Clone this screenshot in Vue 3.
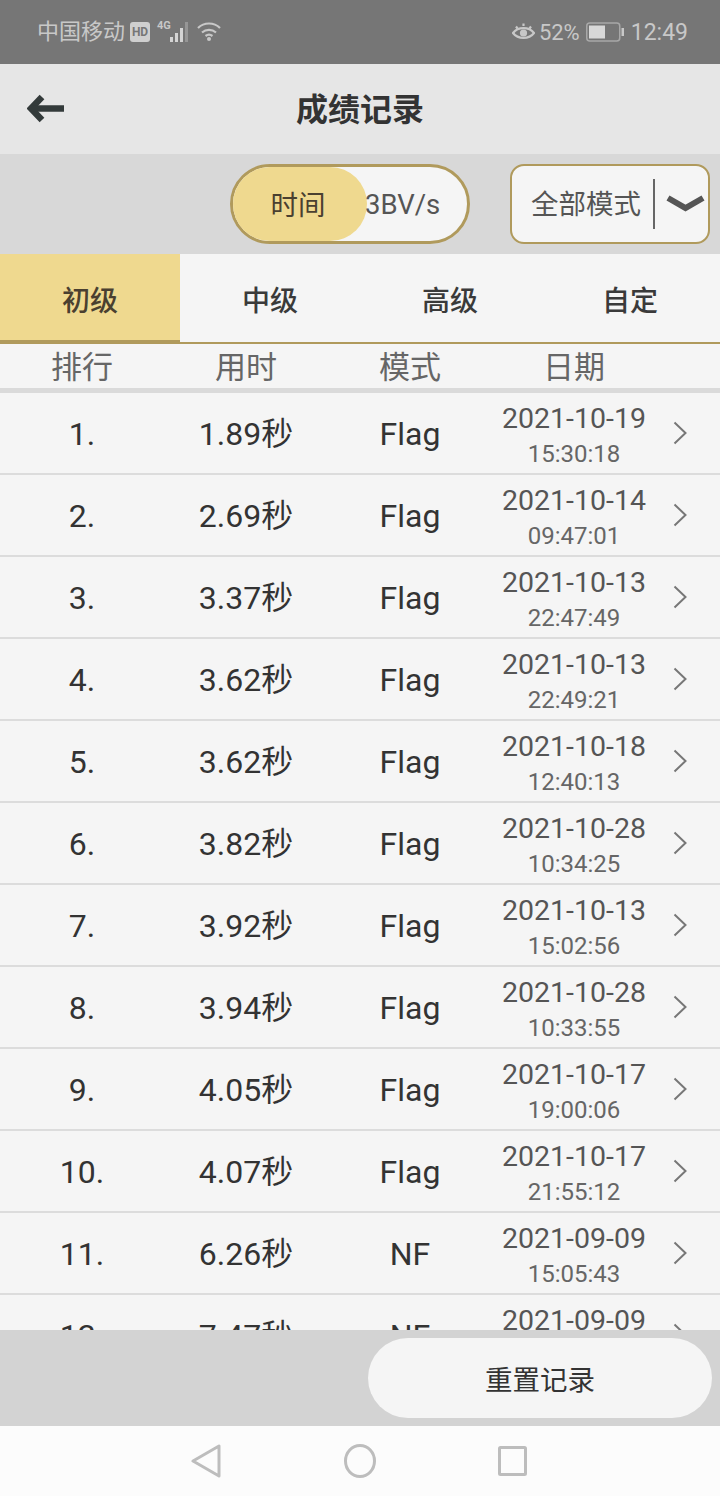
<script setup>
import { ref } from 'vue'

const tabs = ['初级', '中级', '高级', '自定']
const activeTab = ref(0)

const records = [
  { time: '1.89', mode: 'Flag', date: '2021-10-19', clock: '15:30:18' },
  { time: '2.69', mode: 'Flag', date: '2021-10-14', clock: '09:47:01' },
  { time: '3.37', mode: 'Flag', date: '2021-10-13', clock: '22:47:49' },
  { time: '3.62', mode: 'Flag', date: '2021-10-13', clock: '22:49:21' },
  { time: '3.62', mode: 'Flag', date: '2021-10-18', clock: '12:40:13' },
  { time: '3.82', mode: 'Flag', date: '2021-10-28', clock: '10:34:25' },
  { time: '3.92', mode: 'Flag', date: '2021-10-13', clock: '15:02:56' },
  { time: '3.94', mode: 'Flag', date: '2021-10-28', clock: '10:33:55' },
  { time: '4.05', mode: 'Flag', date: '2021-10-17', clock: '19:00:06' },
  { time: '4.07', mode: 'Flag', date: '2021-10-17', clock: '21:55:12' },
  { time: '6.26', mode: 'NF', date: '2021-09-09', clock: '15:05:43' },
  { time: '7.47', mode: 'NF', date: '2021-09-09', clock: '15:11:20' },
]
</script>

<template>
  <div class="page">
    <div class="status">
      <div class="status-left">
        <span class="carrier">中国移动</span>
        <span class="hd">HD</span>
        <span class="net">4G</span>
        <svg class="bars" width="22" height="22" viewBox="0 0 22 22">
          <rect x="1" y="15" width="3" height="5" fill="#d4d4d4" />
          <rect x="6" y="11" width="3" height="9" fill="#d4d4d4" />
          <rect x="11" y="6" width="3" height="14" fill="#d4d4d4" />
          <rect x="16" y="0" width="3" height="20" fill="#969696" />
        </svg>
        <svg class="wifi" width="25" height="22" viewBox="0 0 25 22" fill="none" stroke="#c8c8c8" stroke-width="2.200">
          <path d="M1 7C7 1 17 1 23 7" />
          <path d="M5 11.500C9 8 15 8 19 11.500" />
          <path d="M8.500 15C10.500 13.500 13.500 13.500 15.500 15" />
          <circle cx="12" cy="18" r="2" fill="#c8c8c8" stroke="none" />
        </svg>
      </div>
      <div class="status-right">
        <svg width="23" height="20" viewBox="0 0 23 20" fill="none" stroke="#c8c8c8" stroke-width="2.200">
          <path d="M1 11C6 4.500 17 4.500 22 11C17 17.500 6 17.500 1 11Z" />
          <circle cx="11.500" cy="11" r="3.600" fill="#c8c8c8" stroke="none" />
          <path d="M4 4.500L5.500 6.500M11.500 1.500V4M19 4.500L17.500 6.500" />
        </svg>
        <span class="pct">52%</span>
        <svg width="38" height="20" viewBox="0 0 38 20">
          <rect x="0.750" y="1" width="33" height="18" rx="3" fill="none" stroke="#a8a8a8" stroke-width="1.500" />
          <rect x="3" y="3.500" width="16" height="13" fill="#d8d8d8" />
          <rect x="35.500" y="6" width="2.500" height="8" fill="#c8c8c8" />
        </svg>
        <span class="clock">12:49</span>
      </div>
    </div>

    <div class="titlebar">
      <svg class="back" width="38" height="30" viewBox="0 0 38 30" fill="none" stroke="#333a3a" stroke-width="6.500">
        <path d="M15 3L4 14.500L15 26" />
        <path d="M5 14.500H37" />
      </svg>
      <span class="title">成绩记录</span>
    </div>

    <div class="toolbar">
      <div class="toggle">
        <span class="toggle-on">时间</span>
        <span class="toggle-off">3BV/s</span>
      </div>
      <div class="select">
        <span class="select-text">全部模式</span>
        <span class="select-line"></span>
        <svg width="39" height="20" viewBox="0 0 39 20" fill="none" stroke="#555" stroke-width="6">
          <path d="M2 4L19.500 14L37 4" />
        </svg>
      </div>
    </div>

    <div class="tabs">
      <div
        v-for="(tab, i) in tabs"
        :key="tab"
        class="tab"
        :class="{ active: i === activeTab }"
        @click="activeTab = i"
      >
        {{ tab }}
      </div>
    </div>

    <div class="head">
      <span>排行</span>
      <span>用时</span>
      <span>模式</span>
      <span>日期</span>
    </div>

    <div class="list">
      <div v-for="(rec, i) in records" :key="i" class="row">
        <span>{{ i + 1 }}.</span>
        <span>{{ rec.time }}秒</span>
        <span>{{ rec.mode }}</span>
        <div class="when">
          <span class="date">{{ rec.date }}</span>
          <span class="hour">{{ rec.clock }}</span>
        </div>
        <svg class="more" width="14" height="24" viewBox="0 0 14 24" fill="none" stroke="#777" stroke-width="2">
          <path d="M1.500 1.500L12.500 12L1.500 22.500" />
        </svg>
      </div>
    </div>

    <div class="footer">
      <button class="reset">重置记录</button>
    </div>

    <div class="nav">
      <svg width="30" height="34" viewBox="0 0 30 34" fill="none" stroke="#bdbdbd" stroke-width="3" stroke-linejoin="round">
        <path d="M28 2V32L2 17Z" />
      </svg>
      <svg class="home" width="32" height="34" viewBox="0 0 32 34" fill="none" stroke="#bdbdbd" stroke-width="3">
        <ellipse cx="16" cy="17" rx="14.500" ry="15.500" />
      </svg>
      <svg width="29" height="30" viewBox="0 0 29 30" fill="none" stroke="#bdbdbd" stroke-width="3" stroke-linejoin="round">
        <rect x="1.500" y="1.500" width="26" height="27" rx="1" />
      </svg>
    </div>
  </div>
</template>

<style scoped>
.page {
  width: 720px;
  height: 1496px;
  display: flex;
  flex-direction: column;
  overflow: hidden;
  background: #f5f5f5;
  font-family: Roboto, 'Noto Sans CJK SC', sans-serif;
  color: #333;
}

.status {
  height: 64px;
  flex-shrink: 0;
  background: #767676;
  display: flex;
  align-items: center;
  justify-content: space-between;
  padding: 0 32px 0 37px;
  color: #c8c8c8;
}
.status-left,
.status-right {
  display: flex;
  align-items: center;
}
.carrier {
  font-size: 22px;
  line-height: 28px;
}
.hd {
  width: 20px;
  height: 20px;
  margin-left: 5px;
  border-radius: 3px;
  background: #cfcfcf;
  color: #767676;
  font-size: 12px;
  font-weight: 700;
  line-height: 20px;
  text-align: center;
}
.net {
  width: 12px;
  margin-left: 7px;
  margin-top: -12px;
  font-size: 11px;
  font-weight: 700;
  line-height: 12px;
  white-space: nowrap;
}
.bars {
  margin-top: 2px;
}
.wifi {
  margin-left: 6px;
}
.pct {
  margin: 0 6px 0 4px;
  font-size: 22px;
}
.clock {
  margin-left: 7px;
  font-size: 23px;
}

.titlebar {
  height: 90px;
  flex-shrink: 0;
  background: #e6e6e6;
  display: flex;
  align-items: center;
  justify-content: center;
  position: relative;
}
.back {
  position: absolute;
  left: 27px;
  top: 30px;
}
.title {
  margin-top: 2px;
  font-size: 32px;
  line-height: 44px;
  font-weight: 700;
  color: #333;
}

.toolbar {
  height: 100px;
  flex-shrink: 0;
  box-sizing: border-box;
  background: #d8d8d8;
  display: flex;
  align-items: center;
  justify-content: flex-end;
  gap: 40px;
  padding-right: 10px;
}
.toggle {
  width: 240px;
  height: 80px;
  box-sizing: border-box;
  border: 3px solid #b09a5c;
  border-radius: 40px;
  background: #f5f5f5;
  display: flex;
  align-items: center;
  overflow: hidden;
  font-size: 27.500px;
}
.toggle-on {
  width: 134px;
  height: 100%;
  flex-shrink: 0;
  box-sizing: border-box;
  padding: 0 4px 2px 0;
  border-radius: 0 40px 40px 0;
  background: #efd98f;
  color: #4a4030;
  display: flex;
  align-items: center;
  justify-content: center;
}
.toggle-off {
  margin-left: -2px;
  color: #555;
}
.select {
  width: 200px;
  height: 80px;
  box-sizing: border-box;
  border: 2px solid #b09a5c;
  border-radius: 14px;
  background: #f5f5f5;
  display: flex;
  align-items: center;
  padding-left: 19px;
  color: #555;
}
.select-text {
  margin-top: 2px;
  font-size: 27.500px;
  line-height: 40px;
}
.select-line {
  width: 2px;
  height: 50px;
  margin: 0 11px 0 12px;
  background: #666;
}

.tabs {
  height: 90px;
  flex-shrink: 0;
  display: grid;
  grid-template-columns: repeat(4, 180px);
  background: #f5f5f5;
}
.tab {
  box-sizing: border-box;
  padding-top: 2px;
  border-bottom: 2px solid #b09a5c;
  display: flex;
  align-items: center;
  justify-content: center;
  font-size: 28px;
  font-weight: 500;
  color: #3a3a3a;
}
.tab.active {
  padding-top: 4px;
  border-bottom-width: 4px;
  background: #efd98f;
  color: #4a4030;
}

.head {
  height: 44px;
  flex-shrink: 0;
  box-sizing: border-box;
  padding-top: 4px;
  display: grid;
  grid-template-columns: repeat(4, 164px);
  align-items: center;
  justify-items: center;
  font-size: 31px;
  line-height: 40px;
  color: #666;
}

.list {
  flex: 1;
  min-height: 0;
  overflow: hidden;
  border-top: 5px solid #dadada;
}
.row {
  height: 82px;
  box-sizing: border-box;
  padding-top: 2px;
  border-bottom: 2px solid #dcdcdc;
  display: grid;
  grid-template-columns: repeat(4, 164px) 1fr;
  align-items: center;
  justify-items: center;
  font-size: 32px;
  line-height: 40px;
  color: #333;
}
.when {
  display: flex;
  flex-direction: column;
  align-items: center;
  padding-top: 6px;
  color: #555;
}
.date {
  font-size: 28.500px;
  line-height: 36px;
}
.hour {
  margin: -1px 0 1px;
  font-size: 24px;
  line-height: 36px;
  color: #666;
}
.more {
  margin: -2px 16px 0 0;
}

.footer {
  height: 96px;
  flex-shrink: 0;
  background: #d3d3d3;
  display: flex;
  justify-content: flex-end;
  padding: 8px 8px 0 0;
  box-sizing: border-box;
}
.reset {
  width: 344px;
  height: 80px;
  border: none;
  border-radius: 40px;
  background: #f5f5f5;
  color: #333;
  font-family: inherit;
  font-size: 27.500px;
}

.nav {
  height: 70px;
  flex-shrink: 0;
  background: #fcfcfc;
  display: flex;
  align-items: center;
  justify-content: center;
  gap: 123px;
  padding-right: 2px;
}
.home + svg {
  margin-left: -1px;
}
</style>
